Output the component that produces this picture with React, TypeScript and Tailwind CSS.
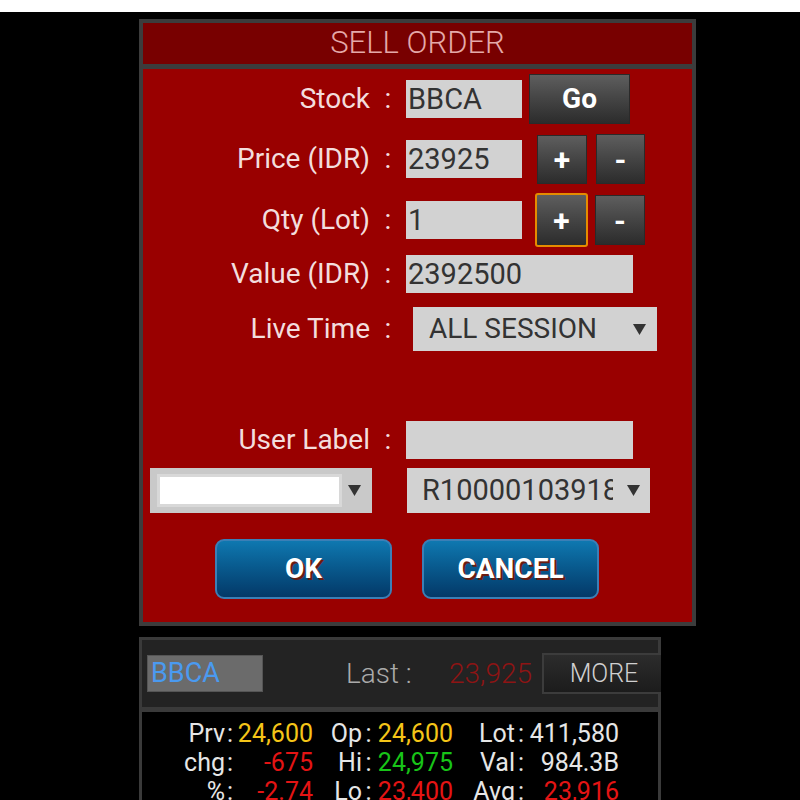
import type { ReactNode } from 'react';

const labelCls = 'w-[227px] shrink-0 text-right text-[28px] leading-none text-[#f3dddd]';
const colonCls = 'w-[36px] shrink-0 text-center text-[28px] leading-none text-[#f3dddd]';
const fieldCls = 'h-[38px] bg-[#d2d2d2] pl-[2px] text-[29px] leading-[38px] text-[#333333]';
const darkBtn =
  'flex items-center justify-center border border-[#2a2a2a] bg-linear-to-b from-[#5e5e5e] to-[#2c2c2c] font-bold text-white';
const blueBtn =
  'flex h-[60px] w-[177px] items-center justify-center rounded-[9px] border-2 border-[#3b7fb6] bg-linear-to-b from-[#0f78b0] to-[#043968] text-[28px] font-bold text-white [text-shadow:2px_2px_0_#6a1c10]';
const thin = "font-['Roboto_Light','Roboto',sans-serif] font-light";

function Caret() {
  return (
    <svg width="13" height="13" viewBox="0 0 13 13" className="shrink-0">
      <polygon points="0,1 13,1 6.5,12" fill="#333333" />
    </svg>
  );
}

function Row({ h, label, children }: { h: string; label?: string; children: ReactNode }) {
  return (
    <div className={`flex items-center ${h}`}>
      {label !== undefined && (
        <>
          <div className={labelCls}>{label}</div>
          <div className={colonCls}>:</div>
        </>
      )}
      {children}
    </div>
  );
}

const red = 'text-[#e41414]';
const stats: [string, string, string][][] = [
  [
    ['Prv', '24,600', 'text-[#f5c518]'],
    ['Op', '24,600', 'text-[#f5c518]'],
    ['Lot', '411,580', 'text-[#e6e6e6]'],
  ],
  [
    ['chg', '-675', red],
    ['Hi', '24,975', 'text-[#18c418]'],
    ['Val', '984.3B', 'text-[#e6e6e6]'],
  ],
  [
    ['%', '-2.74', red],
    ['Lo', '23,400', red],
    ['Avg', '23,916', red],
  ],
];

export default function App() {
  return (
    <div className="h-[800px] w-[800px] overflow-hidden bg-black font-['Roboto',sans-serif]">
      <div className="h-[12px] bg-white" />

      {/* order form */}
      <div className="ml-[139px] mt-[7px] w-[557px] bg-[#3c3c3c] p-[4px]">
        <div className={`flex h-[41px] items-center justify-center bg-[#780000] text-[31px] text-[#e4a9a9] ${thin}`}>
          SELL ORDER
        </div>
        <div className="mt-[5px] h-[553px] bg-[#990000]">
          <Row h="h-[60px]" label="Stock">
            <div className={`${fieldCls} w-[116px]`}>BBCA</div>
            <div className={`${darkBtn} ml-[7px] h-[50px] w-[101px] text-[28px]`}>Go</div>
          </Row>
          <Row h="h-[60px]" label="Price (IDR)">
            <div className={`${fieldCls} w-[116px]`}>23925</div>
            <div className={`${darkBtn} ml-[15px] h-[49px] w-[50px] text-[30px]`}>+</div>
            <div className={`${darkBtn} ml-[9px] h-[50px] w-[49px] text-[30px]`}>-</div>
          </Row>
          <Row h="h-[62px]" label="Qty (Lot)">
            <div className={`${fieldCls} w-[116px]`}>1</div>
            <div className={`${darkBtn} ml-[13px] h-[54px] w-[53px] rounded-[3px] border-2 border-[#e58c00] text-[30px]`}>
              +
            </div>
            <div className={`${darkBtn} ml-[7px] h-[50px] w-[50px] text-[30px]`}>-</div>
          </Row>
          <Row h="h-[46px]" label="Value (IDR)">
            <div className={`${fieldCls} w-[227px]`}>2392500</div>
          </Row>
          <Row h="h-[64px]" label="Live Time">
            <div className="ml-[7px] flex h-[44px] w-[244px] items-center bg-[#d2d2d2] pl-[16px] pr-[11px]">
              <span className="flex-1 text-[28px] text-[#333333]">ALL SESSION</span>
              <Caret />
            </div>
          </Row>
          <div className="h-[59px]" />
          <Row h="h-[40px]" label="User Label">
            <div className={`${fieldCls} w-[227px]`} />
          </Row>
          <Row h="h-[61px]">
            <div className="ml-[7px] flex h-[45px] w-[222px] items-center bg-[#c9c9c9]">
              <div className="ml-[7px] h-[33px] w-[185px] border-[3px] border-[#d8d8d8] bg-white" />
              <div className="ml-[6px]">
                <Caret />
              </div>
            </div>
            <div className="ml-[35px] flex h-[45px] w-[243px] items-center bg-[#d2d2d2] pl-[15px]">
              <span className="w-[191px] overflow-hidden whitespace-nowrap text-[29px] text-[#333333]">
                R10000103918
              </span>
              <div className="ml-[14px]">
                <Caret />
              </div>
            </div>
          </Row>
          <div className="mt-[18px] flex gap-[30px] pl-[72px]">
            <div className={blueBtn}>OK</div>
            <div className={blueBtn}>CANCEL</div>
          </div>
        </div>
      </div>

      {/* quote panel */}
      <div className="ml-[139px] mt-[11px] h-[200px] w-[522px] overflow-hidden bg-[#3a3a3a] px-[3px] pt-[3px]">
        <div className="flex h-[67px] items-center bg-[#232323]">
          <div className="ml-[5px] h-[37px] w-[116px] shrink-0 border border-[#555555] bg-[#6b6b6b] pl-[3px] text-[27px] leading-[35px] text-[#4a9af0]">
            BBCA
          </div>
          <div className={`ml-[83px] w-[103px] shrink-0 text-[28px] text-[#aaaaaa] ${thin}`}>Last :</div>
          <div className={`w-[93px] shrink-0 text-[28px] text-[#8e1414] ${thin}`}>23,925</div>
          <div
            className={`flex h-[41px] w-[124px] shrink-0 items-center justify-center border-2 border-[#3c3c3c] bg-linear-to-b from-[#2c2c2c] to-[#1c1c1c] text-[25px] text-[#d0d0d0] ${thin}`}
          >
            MORE
          </div>
        </div>
        <div className="mt-[5px] h-[200px] bg-black pt-[7px]">
          <div className="grid grid-cols-[83px_10px_78px_49px_13px_78px_62px_12px_92px] text-[25px] leading-[29px] text-[#e6e6e6]">
            {stats.map((row) =>
              row.map(([k, v, c]) => (
                <div key={k} className="contents">
                  <div className="text-right">{k}</div>
                  <div className="text-center">:</div>
                  <div className={`text-right ${c}`}>{v}</div>
                </div>
              )),
            )}
          </div>
        </div>
      </div>
    </div>
  );
}
